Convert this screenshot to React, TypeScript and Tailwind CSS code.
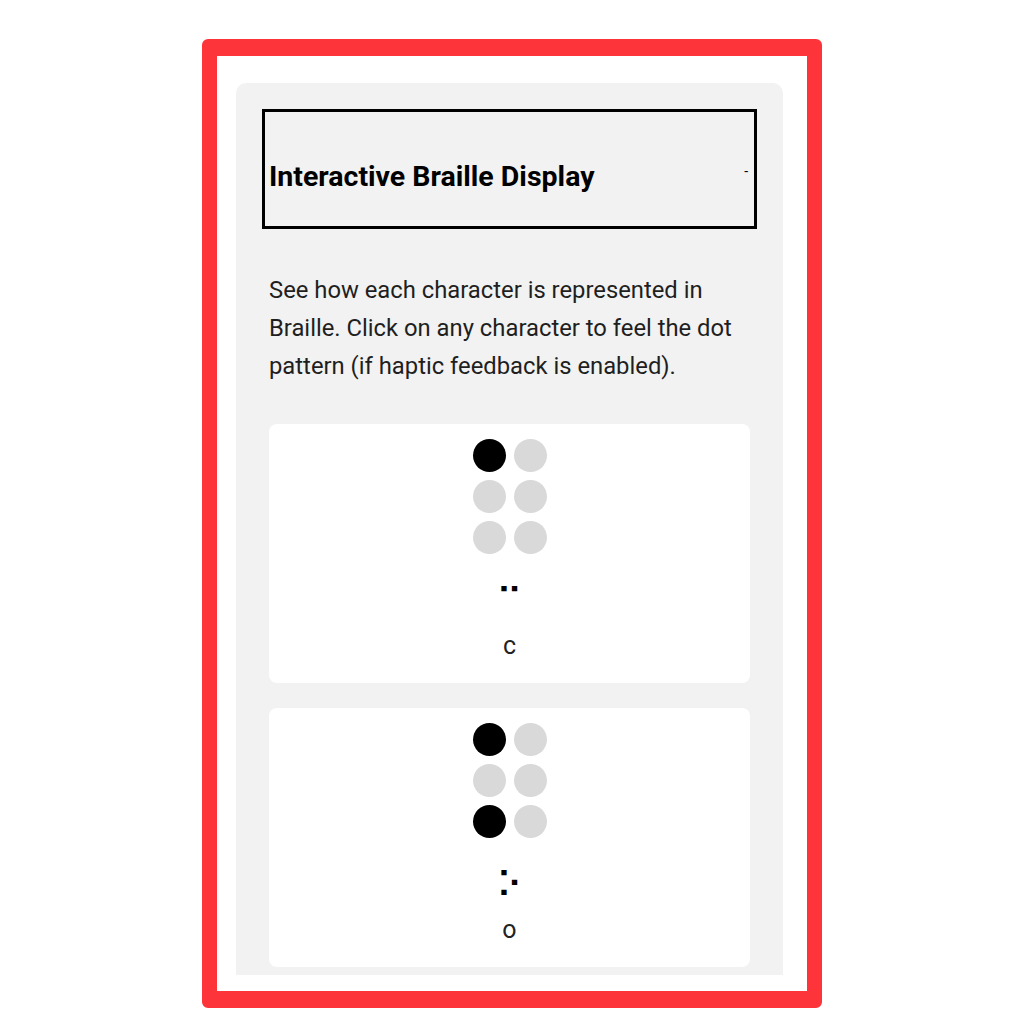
import React from 'react';

type Cell = { char: string; braille: string; dots: boolean[] };

// dots ordered row by row: [1,4],[2,5],[3,6]
const cells: Cell[] = [
  { char: 'c', braille: '\u2809', dots: [true, false, false, false, false, false] },
  { char: 'o', braille: '\u2815', dots: [true, false, false, false, true, false] },
];

const BrailleCard: React.FC<{ cell: Cell }> = ({ cell }) => (
  <div className="bg-white rounded-[8px] h-[259px] shrink-0 flex flex-col items-center pt-[15px]">
    <div className="grid grid-cols-2 gap-[8px]">
      {cell.dots.map((on, i) => (
        <span
          key={i}
          className={`block w-[33px] h-[33px] rounded-full ${on ? 'bg-black' : 'bg-[#d9d9d9]'}`}
        />
      ))}
    </div>
    <div className="mt-[26px] h-[44px] flex items-center text-[36px] leading-none text-black font-['DejaVu_Sans',sans-serif]">
      {cell.braille}
    </div>
    <div className="mt-[9px] text-[25px] leading-none text-[#222] font-['Roboto',sans-serif]">
      {cell.char}
    </div>
  </div>
);

export default function App() {
  return (
    <div className="min-h-screen bg-white flex justify-center pt-[39px] font-['Roboto',sans-serif]">
      <div className="w-[620px] h-[969px] border-x-[15px] border-t-[17px] border-b-[17px] border-[#fe343b] rounded-[6px] bg-white pl-[19px] pr-[24px] pt-[27px] pb-[16px] flex flex-col overflow-hidden">
        <div className="flex-1 bg-[#f2f2f2] rounded-t-[10px] pt-[26px] px-[26px] pb-[10px] flex flex-col overflow-hidden">
          {/* Title box */}
          <div className="border-[3px] border-black h-[120px] shrink-0 flex justify-between items-start pl-[4px] pr-[6px]">
            <h2 className="mt-[49px] text-[28.5px] leading-[32px] font-bold text-black">
              Interactive Braille Display
            </h2>
            <span className="mt-[52px] text-[14px] leading-none text-black">-</span>
          </div>

          <p className="mt-[42px] px-[7px] text-[23.8px] leading-[38px] text-[#1f1f1f]">
            See how each character is represented in Braille. Click on any character to feel the dot
            pattern (if haptic feedback is enabled).
          </p>

          <div className="mt-[39px] px-[7px] flex flex-col gap-[25px]">
            {cells.map((c) => (
              <BrailleCard key={c.char} cell={c} />
            ))}
          </div>
        </div>
      </div>
    </div>
  );
}
